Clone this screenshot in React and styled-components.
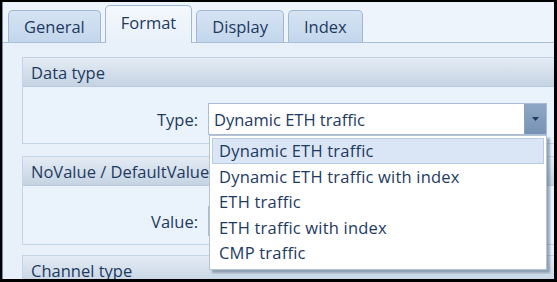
import styled, { createGlobalStyle } from "styled-components"

const Global = createGlobalStyle`
  html, body { margin: 0; padding: 0; background: #000; }
  body { font-family: "Open Sans", "Noto Sans", sans-serif; }
`

const Frame = styled.div`
  width: 557px;
  height: 282px;
  box-sizing: border-box;
  border-style: solid;
  border-color: #000;
  border-width: 2px 3px 3px 2px;
  overflow: hidden;
`
const Window = styled.div`
  height: 100%;
  background: #eef4fc;
  border-left: 1px solid #6f8cb4;
  display: flex;
  flex-direction: column;
`
const TabStrip = styled.div`
  display: flex;
  align-items: flex-end;
  gap: 4px;
  padding: 0 0 0 5px;
  height: 40px;
  border-bottom: 1px solid #a8bfda;
  flex-shrink: 0;
`
const Tab = styled.div`
  height: ${p => (p.$active ? 38 : 32)}px;
  box-sizing: border-box;
  padding: 0 15px ${p => (p.$active ? "5px" : "0")};
  display: flex;
  align-items: center;
  font-size: 16.5px;
  color: #1e3a5f;
  border: 1px solid #9fb8d6;
  border-bottom: none;
  border-radius: 5px 5px 0 0;
  background: ${p =>
    p.$active
      ? "linear-gradient(#f4f8fd, #e8f0f9)"
      : "linear-gradient(#d6e4f3, #c3d6ec)"};
  margin-bottom: ${p => (p.$active ? "-1px" : "0")};
  position: relative;
`
const Page = styled.div`
  flex: 1;
  padding: 14px 0 0 19px;
  display: flex;
  flex-direction: column;
  position: relative;
  background: #e8f0f9;
`
const Group = styled.div`
  border: 1px solid #c4d4e7;
  border-right: none;
  background: #eaf2fc;
  margin-bottom: ${p => p.$gap || 0}px;
`
const GroupHead = styled.div`
  height: 28px;
  padding-left: 8px;
  display: flex;
  align-items: center;
  font-size: 16.5px;
  color: #1e3a5f;
  background: linear-gradient(#e4ecf5, #c5d3e2);
  border-bottom: 1px solid #b7c9dd;
`
const GroupBody = styled.div`
  height: ${p => p.$h}px;
  box-sizing: border-box;
  padding-top: ${p => p.$pt}px;
  display: flex;
  align-items: flex-start;
`
const Field = styled.div`
  display: flex;
  align-items: center;
`
const Label = styled.div`
  width: 175px;
  text-align: right;
  font-size: 16.5px;
  color: #1e3a5f;
  margin-right: 10px;
`
const Combo = styled.div`
  width: 339px;
  height: 32px;
  box-sizing: border-box;
  border: 1px solid #a9bcd3;
  background: #fff;
  display: flex;
  align-items: stretch;
  position: relative;
`
const ComboText = styled.div`
  flex: 1;
  display: flex;
  align-items: center;
  padding-left: 5px;
  font-size: 16.5px;
  color: #1e3a5f;
`
const ComboButton = styled.div`
  width: 21px;
  background: linear-gradient(#8ea7c4, #7793b5);
  border-left: 1px solid #8aa0bb;
  display: flex;
  align-items: center;
  justify-content: center;
`
const List = styled.div`
  position: absolute;
  left: 0;
  top: 31px;
  width: 338px;
  box-sizing: border-box;
  background: #fff;
  border: 1px solid #b4c4d6;
  padding: 2px 2px 3px 2px;
  box-shadow: 3px 3px 2px rgba(90, 105, 125, 0.55);
  z-index: 5;
`
const Item = styled.div`
  height: 25.5px;
  box-sizing: border-box;
  display: flex;
  align-items: center;
  padding-left: 6px;
  font-size: 16.5px;
  letter-spacing: 0.2px;
  color: #1e3a5f;
  background: ${p => (p.$sel ? "#dae6f5" : "transparent")};
  border: 1px solid ${p => (p.$sel ? "#b8cce4" : "transparent")};
`
const Input = styled.div`
  width: 339px;
  height: 30px;
  box-sizing: border-box;
  background: #fff;
  border: 1px solid #a9bcd3;
`

const items = [
  "Dynamic ETH traffic",
  "Dynamic ETH traffic with index",
  "ETH traffic",
  "ETH traffic with index",
  "CMP traffic",
]

export default function App() {
  return (
    <>
      <Global />
      <Frame>
        <Window>
          <TabStrip>
            <Tab>General</Tab>
            <Tab $active>Format</Tab>
            <Tab>Display</Tab>
            <Tab>Index</Tab>
          </TabStrip>
          <Page>
            <Group $gap={12}>
              <GroupHead>Data type</GroupHead>
              <GroupBody $h={56} $pt={16}>
                <Field>
                  <Label>Type:</Label>
                  <Combo>
                    <ComboText>Dynamic ETH traffic</ComboText>
                    <ComboButton>
                      <svg width="7" height="4" viewBox="0 0 7 4">
                        <path d="M0 0h7L3.5 4z" fill="#1e3a5f" />
                      </svg>
                    </ComboButton>
                    <List>
                      {items.map((t, i) => (
                        <Item key={t} $sel={i === 0}>{t}</Item>
                      ))}
                    </List>
                  </Combo>
                </Field>
              </GroupBody>
            </Group>
            <Group $gap={10}>
              <GroupHead>NoValue / DefaultValue</GroupHead>
              <GroupBody $h={58} $pt={20}>
                <Field>
                  <Label>Value:</Label>
                  <Input />
                </Field>
              </GroupBody>
            </Group>
            <Group>
              <GroupHead>Channel type</GroupHead>
            </Group>
          </Page>
        </Window>
      </Frame>
    </>
  )
}
